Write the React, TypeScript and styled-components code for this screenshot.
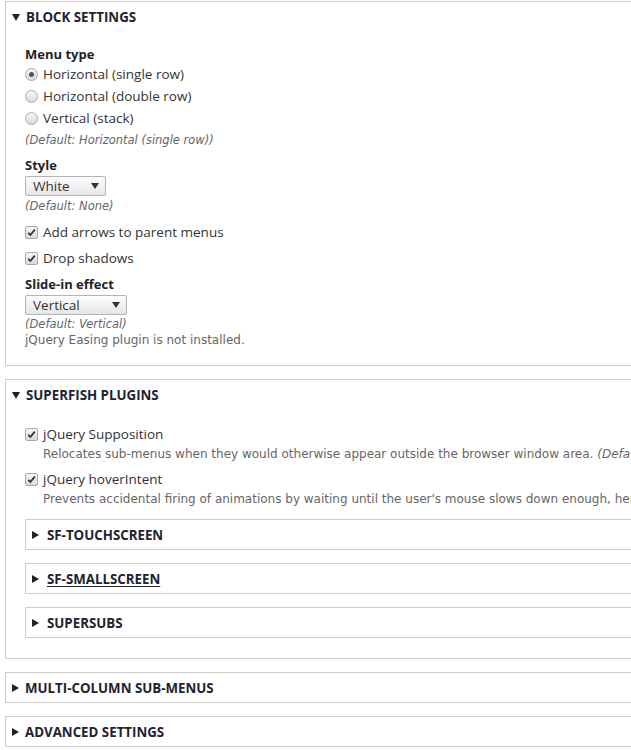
import React from 'react';
import styled, { createGlobalStyle } from 'styled-components';

const GlobalStyle = createGlobalStyle`
  html, body {
    margin: 0;
    padding: 0;
    background: #fff;
    overflow: hidden;
  }
  body {
    font-family: 'Open Sans', 'Noto Sans', sans-serif;
    font-size: 13px;
    color: #333;
  }
`;

const Page = styled.div`
  width: 631px;
  height: 750px;
  overflow: hidden;
  padding: 1px 0 0 5px;
  box-sizing: border-box;
`;

const Fieldset = styled.div<{ $nested?: boolean }>`
  width: ${(p) => (p.$nested ? '700px' : '720px')};
  border: 1px solid #ccc;
  background: #fff;
  & + & {
    margin-top: ${(p) => (p.$nested ? '13px' : '14px')};
  }
`;

const Summary = styled.div<{ $nested?: boolean; $underline?: boolean }>`
  height: 29px;
  display: flex;
  align-items: center;
  padding-left: 6px;
  gap: ${(p) => (p.$nested ? '8px' : '6px')};
  font-weight: 700;
  font-size: 13.3px;
  text-transform: uppercase;
  color: #222330;
  white-space: nowrap;
  span {
    text-decoration: ${(p) => (p.$underline ? 'underline' : 'none')};
    text-underline-offset: 2px;
  }
`;

const Arrow = styled.i<{ $open?: boolean }>`
  display: block;
  width: 0;
  height: 0;
  ${(p) =>
    p.$open
      ? `border-left: 4px solid transparent;
         border-right: 4px solid transparent;
         border-top: 7px solid #222;
         margin-top: 1px;`
      : `border-top: 4px solid transparent;
         border-bottom: 4px solid transparent;
         border-left: 7px solid #222;`}
`;

const Content = styled.div<{ $pt: number; $pb: number }>`
  padding: ${(p) => p.$pt}px 0 ${(p) => p.$pb}px 19px;
`;

const Label = styled.div<{ $mt?: number }>`
  font-weight: 700;
  line-height: 18px;
  color: #222;
  margin-top: ${(p) => p.$mt ?? 0}px;
`;

const OptionRow = styled.label<{ $h?: number; $mt?: number }>`
  display: flex;
  align-items: center;
  gap: 5px;
  height: ${(p) => p.$h ?? 22}px;
  margin-top: ${(p) => p.$mt ?? 0}px;
  font-size: 13.5px;
  line-height: 18px;
  white-space: nowrap;
`;

const Radio = styled.span<{ $checked?: boolean }>`
  width: 11px;
  height: 11px;
  border-radius: 50%;
  border: 1px solid #a9a9a9;
  background: linear-gradient(#f6f6f6, #dadada);
  position: relative;
  flex: none;
  &::after {
    content: '';
    display: ${(p) => (p.$checked ? 'block' : 'none')};
    position: absolute;
    left: 3px;
    top: 3px;
    width: 5px;
    height: 5px;
    border-radius: 50%;
    background: #555;
  }
`;

const Check = styled.span`
  width: 11px;
  height: 11px;
  border: 1px solid #a9a9a9;
  border-radius: 2px;
  background: linear-gradient(#f6f6f6, #dadada);
  flex: none;
  display: flex;
  align-items: center;
  justify-content: center;
  svg {
    display: block;
  }
`;

const Description = styled.div<{ $italic?: boolean; $mt?: number; $indent?: boolean }>`
  font-family: 'DejaVu Sans', sans-serif;
  font-size: ${(p) => (p.$italic ? '11.5px' : '12px')};
  line-height: 16px;
  color: #666;
  font-style: ${(p) => (p.$italic ? 'italic' : 'normal')};
  margin-top: ${(p) => p.$mt ?? 0}px;
  padding-left: ${(p) => (p.$indent ? '18px' : '0')};
  white-space: nowrap;
  em {
    font-style: italic;
  }
`;

const Select = styled.div<{ $w: number; $mt?: number }>`
  width: ${(p) => p.$w}px;
  height: 20px;
  box-sizing: border-box;
  margin-top: ${(p) => p.$mt ?? 0}px;
  border: 1px solid #b4b4b4;
  border-radius: 2px;
  background: linear-gradient(#fdfdfd, #e6e6e6);
  display: flex;
  align-items: center;
  justify-content: space-between;
  padding: 0 6px 0 7px;
  font-size: 13.5px;
  color: #333;
`;

const SelectArrow = styled.i`
  width: 0;
  height: 0;
  border-left: 4px solid transparent;
  border-right: 4px solid transparent;
  border-top: 6px solid #333;
`;

const NestedList = styled.div`
  margin-top: 12px;
`;

const CheckMark = () => (
  <svg width="9" height="9" viewBox="0 0 9 9">
    <path d="M1.2 4.8 L3.4 7 L7.8 1.6" fill="none" stroke="#333" strokeWidth="1.8" />
  </svg>
);

const CheckOption = ({ label, mt }: { label: string; mt?: number }) => (
  <OptionRow $h={20} $mt={mt}>
    <Check>
      <CheckMark />
    </Check>
    {label}
  </OptionRow>
);

const Collapsed = ({ title, nested, underline }: { title: string; nested?: boolean; underline?: boolean }) => (
  <Fieldset $nested={nested}>
    <Summary $nested={nested} $underline={underline}>
      <Arrow />
      <span>{title}</span>
    </Summary>
  </Fieldset>
);

const App = () => {
  return (
    <Page>
      <GlobalStyle />
      <Fieldset>
        <Summary>
          <Arrow $open />
          <span>Block settings</span>
        </Summary>
        <Content $pt={14} $pb={17}>
          <Label>Menu type</Label>
          <OptionRow>
            <Radio $checked />
            Horizontal (single row)
          </OptionRow>
          <OptionRow>
            <Radio />
            Horizontal (double row)
          </OptionRow>
          <OptionRow>
            <Radio />
            Vertical (stack)
          </OptionRow>
          <Description $italic $mt={3}>(Default: Horizontal (single row))</Description>

          <Label $mt={8}>Style</Label>
          <Select $w={81} $mt={2}>
            White
            <SelectArrow />
          </Select>
          <Description $italic $mt={2}>(Default: None)</Description>

          <CheckOption label="Add arrows to parent menus" mt={8} />
          <CheckOption label="Drop shadows" mt={6} />

          <Label $mt={7}>Slide-in effect</Label>
          <Select $w={102} $mt={2}>
            Vertical
            <SelectArrow />
          </Select>
          <Description $italic $mt={1}>(Default: Vertical)</Description>
          <Description>jQuery Easing plugin is not installed.</Description>
        </Content>
      </Fieldset>

      <Fieldset>
        <Summary>
          <Arrow $open />
          <span>Superfish plugins</span>
        </Summary>
        <Content $pt={15} $pb={20}>
          <CheckOption label="jQuery Supposition" />
          <Description $indent $mt={2}>
            Relocates sub-menus when they would otherwise appear outside the browser window area.{' '}
            <em>(Default: enabled)</em>
          </Description>
          <CheckOption label="jQuery hoverIntent" mt={7} />
          <Description $indent $mt={2}>
            Prevents accidental firing of animations by waiting until the user's mouse slows down enough, hence
            determining user's intent.
          </Description>
          <NestedList>
            <Collapsed nested title="sf-Touchscreen" />
            <Collapsed nested underline title="sf-Smallscreen" />
            <Collapsed nested title="Supersubs" />
          </NestedList>
        </Content>
      </Fieldset>

      <Collapsed title="Multi-column sub-menus" />
      <Collapsed title="Advanced settings" />
    </Page>
  );
};

export default App;
